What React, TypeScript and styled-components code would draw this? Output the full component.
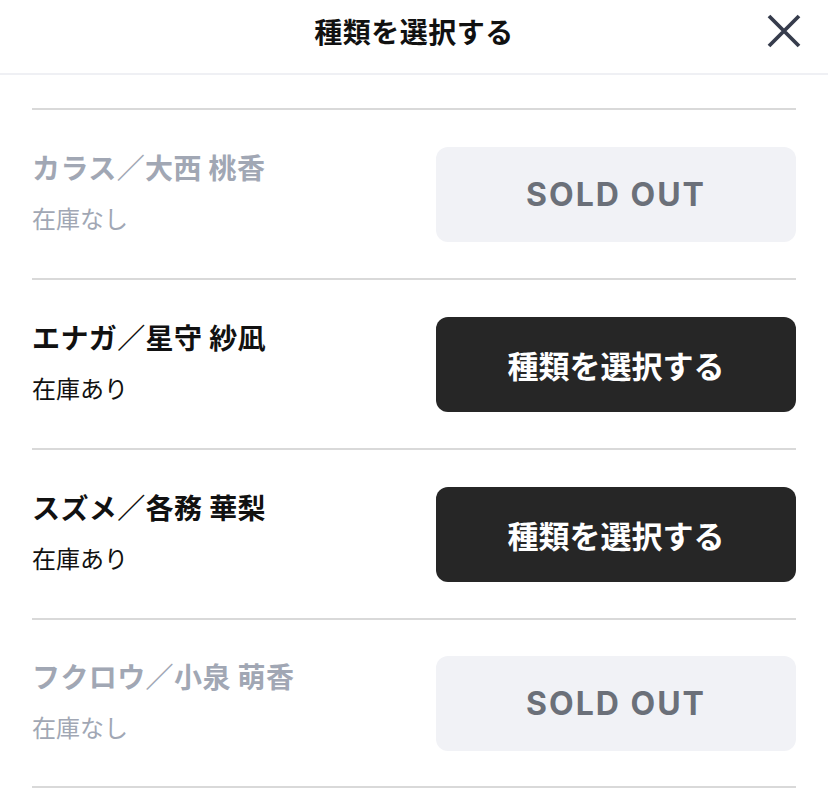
import React from 'react'
import styled, { createGlobalStyle } from 'styled-components'

const GlobalStyle = createGlobalStyle`
  html, body {
    margin: 0;
    padding: 0;
    background: #ffffff;
    font-family: "Noto Sans CJK JP", "Noto Sans", sans-serif;
  }
`

type Item = {
  name: string
  inStock: boolean
}

const ITEMS: Item[] = [
  { name: 'カラス／大西 桃香', inStock: false },
  { name: 'エナガ／星守 紗凪', inStock: true },
  { name: 'スズメ／各務 華梨', inStock: true },
  { name: 'フクロウ／小泉 萌香', inStock: false },
]

const App = () => {
  return (
    <Page>
      <GlobalStyle />
      <Header>
        <Title>種類を選択する</Title>
        <CloseButton aria-label="close">
          <svg width="34" height="34" viewBox="0 0 34 34" fill="none">
            <path
              d="M2 2L32 32M32 2L2 32"
              stroke="#363c4c"
              strokeWidth="3.8"
              strokeLinecap="butt"
            />
          </svg>
        </CloseButton>
      </Header>
      <List>
        {ITEMS.map((item) => (
          <Row key={item.name}>
            <Info>
              <Name $muted={!item.inStock}>{item.name}</Name>
              <Stock $muted={!item.inStock}>
                {item.inStock ? '在庫あり' : '在庫なし'}
              </Stock>
            </Info>
            {item.inStock ? (
              <SelectButton>種類を選択する</SelectButton>
            ) : (
              <SoldOut>SOLD OUT</SoldOut>
            )}
          </Row>
        ))}
      </List>
    </Page>
  )
}

export default App

const Page = styled.div`
  width: 828px;
  min-height: 799px;
  background: #fff;
`

const Header = styled.header`
  position: relative;
  height: 75px;
  display: flex;
  align-items: center;
  justify-content: center;
  padding-bottom: 12px;
  border-bottom: 2px solid #eff0f4;
  box-sizing: border-box;
`

const Title = styled.h1`
  margin: 0;
  font-size: 28px;
  font-weight: 700;
  color: #111;
  letter-spacing: 0.5px;
`

const CloseButton = styled.button`
  position: absolute;
  right: 27px;
  top: 14px;
  width: 34px;
  height: 34px;
  padding: 0;
  border: none;
  background: none;
  display: flex;
`

const List = styled.div`
  padding: 33px 32px 0;
`

const Row = styled.div`
  height: 170px;
  box-sizing: border-box;
  border-top: 2px solid #d9d9d9;
  display: flex;
  align-items: center;
  justify-content: space-between;

  &:last-child {
    border-bottom: 2px solid #d9d9d9;
  }
`

const Info = styled.div`
  display: flex;
  flex-direction: column;
  gap: 18px;
  padding-bottom: 6px;
`

const Name = styled.div<{ $muted: boolean }>`
  font-size: 28px;
  font-weight: 700;
  line-height: 36px;
  letter-spacing: 0.4px;
  color: ${(p) => (p.$muted ? '#a1a7b4' : '#111111')};
`

const Stock = styled.div<{ $muted: boolean }>`
  font-size: 24px;
  line-height: 30px;
  color: ${(p) => (p.$muted ? '#a1a7b4' : '#111111')};
`

const ActionBase = styled.div`
  width: 360px;
  height: 95px;
  border-radius: 12px;
  display: flex;
  align-items: center;
  justify-content: center;
  font-weight: 700;
`

const SelectButton = styled(ActionBase)`
  background: #262626;
  color: #ffffff;
  font-size: 31px;
  cursor: pointer;
`

const SoldOut = styled(ActionBase)`
  background: #f1f2f6;
  color: #6b7079;
  font-family: Inter, "Noto Sans", sans-serif;
  font-size: 32px;
  letter-spacing: 2px;
`
